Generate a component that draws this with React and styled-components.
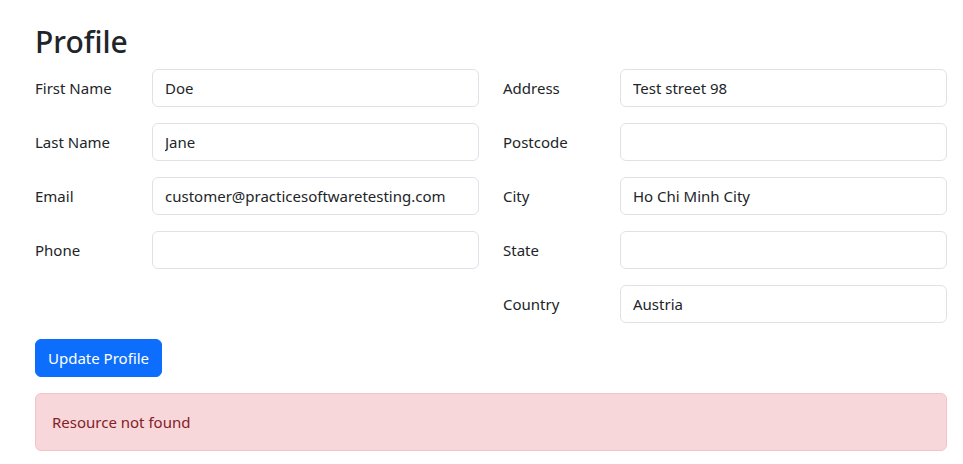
import React from "react";
import styled, { createGlobalStyle } from "styled-components";

const FONT = `"Segoe UI", "Noto Sans", "Liberation Sans", sans-serif`;

const GlobalStyle = createGlobalStyle`
  *, *::before, *::after { box-sizing: border-box; }
  body {
    margin: 0;
    font-family: ${FONT};
    font-size: 15px;
    line-height: 24px;
    color: #212529;
    background: #fff;
  }
`;

const Container = styled.div`
  padding: 22px 16px 0 35px;
  width: 963px;
`;

const Title = styled.h2`
  margin: 0 0 8px;
  font-size: 30px;
  font-weight: 500;
  line-height: 39px;
`;

const Columns = styled.div`
  display: grid;
  grid-template-columns: 444px 444px;
  column-gap: 24px;
`;

const Field = styled.div`
  display: grid;
  grid-template-columns: 117px 327px;
  margin-bottom: 16px;
`;

const Label = styled.label`
  padding: 7px 0;
  line-height: 24px;
`;

const Input = styled.input`
  display: block;
  width: 100%;
  height: 38px;
  padding: 6px 12px;
  font: inherit;
  color: #212529;
  border: 1px solid #dee2e6;
  border-radius: 6px;
  background: #fff;
`;

const Button = styled.button`
  display: inline-block;
  height: 38px;
  padding: 6px 12px;
  font: inherit;
  line-height: 24px;
  color: #fff;
  background: #0d6efd;
  border: 1px solid #0d6efd;
  border-radius: 6px;
`;

const Alert = styled.div`
  margin-top: 16px;
  padding: 16px;
  color: #842029;
  background: #f8d7da;
  border: 1px solid #f5c2c7;
  border-radius: 6px;
  width: 912px;
`;

const FormField = ({ label, value }) => (
  <Field>
    <Label>{label}</Label>
    <Input defaultValue={value} />
  </Field>
);

const left = [
  ["First Name", "Doe"],
  ["Last Name", "Jane"],
  ["Email", "customer@practicesoftwaretesting.com"],
  ["Phone", ""],
];

const right = [
  ["Address", "Test street 98"],
  ["Postcode", ""],
  ["City", "Ho Chi Minh City"],
  ["State", ""],
  ["Country", "Austria"],
];

export default function App() {
  return (
    <>
      <GlobalStyle />
      <Container>
        <Title>Profile</Title>
        <Columns>
          <div>
            {left.map(([l, v]) => (
              <FormField key={l} label={l} value={v} />
            ))}
          </div>
          <div>
            {right.map(([l, v]) => (
              <FormField key={l} label={l} value={v} />
            ))}
          </div>
        </Columns>
        <Button>Update Profile</Button>
        <Alert>Resource not found</Alert>
      </Container>
    </>
  );
}
